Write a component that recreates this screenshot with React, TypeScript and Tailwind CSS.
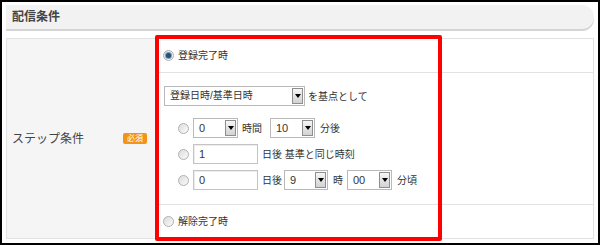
function Radio({ checked }: { checked?: boolean }) {
  return (
    <span className="flex h-[11px] w-[11px] shrink-0 items-center justify-center rounded-full border border-[#b0b0b0] bg-linear-to-br from-[#dcdcdc] to-[#fbfbfb]">
      {checked && <span className="h-[5px] w-[5px] rounded-full bg-[#24507a] shadow-[0_0_0_1px_#7d9bb8]" />}
    </span>
  );
}

function Select({ value, w, size = 'text-[11px]' }: { value: string; w: string; size?: string }) {
  return (
    <div className={`flex h-[20px] ${w} shrink-0 items-center border border-[#b9b9b9] bg-white`}>
      <span className={`flex-1 pl-[5px] ${size} leading-none`}>{value}</span>
      <span className="mr-[1px] flex h-[16px] w-[11px] items-center justify-center border border-[#8e8e8e] bg-linear-to-b from-[#f6f6f6] to-[#d2d2d2]">
        <span className="h-0 w-0 border-x-[3px] border-t-[4px] border-x-transparent border-t-black" />
      </span>
    </div>
  );
}

function TextInput({ value }: { value: string }) {
  return (
    <div className="flex h-[20px] w-[65px] shrink-0 items-center border border-[#c4c4c4] bg-white pl-[5px] text-[11px] leading-none shadow-[inset_1px_1px_0_#ececec]">
      {value}
    </div>
  );
}

export default function App() {
  return (
    <div className="relative h-[245px] w-[600px] overflow-hidden border-2 border-black bg-white font-['Liberation_Sans','Noto_Sans_CJK_JP',sans-serif] text-[10px] text-[#333]">
      {/* 見出し */}
      <div className="ml-[4px] mt-[3px] flex h-[24px] w-[588px] items-center rounded-r-[12px] bg-[#f2f2f2] pl-[6px] shadow-[0_2px_0_#d4d4d4]">
        <span className="text-[12px] font-bold text-[#444]">配信条件</span>
      </div>

      <div className="ml-[4px] mt-[9px] flex h-[201px] w-[588px] border border-[#e2e2e2]">
        <div className="flex w-[148px] items-center bg-[#f5f5f5] pl-[5px] pr-[8px]">
          <span className="flex-1 text-[12px] text-[#444]">ステップ条件</span>
          <span className="flex h-[11px] w-[24px] items-center justify-center rounded-[2px] bg-[#f29419] text-[8px] leading-none text-white">
            必須
          </span>
        </div>

        <div className="flex flex-1 flex-col">
          <div className="flex h-[34px] items-center gap-[4px] border-b border-[#e2e2e2] pl-[8px]">
            <Radio checked />
            <span>登録完了時</span>
          </div>

          <div className="flex h-[132px] flex-col border-b border-[#e2e2e2] pl-[9px] pt-[13px]">
            <div className="flex items-center gap-[3px]">
              <Select value="登録日時/基準日時" w="w-[141px]" size="text-[10px]" />
              <span>を基点として</span>
            </div>

            <div className="mt-[12px] flex flex-col gap-[6px] pl-[14px]">
              <div className="flex items-center">
                <Radio />
                <span className="w-[4px]" />
                <Select value="0" w="w-[45px]" />
                <span className="ml-[4px]">時間</span>
                <span className="ml-[8px]" />
                <Select value="10" w="w-[45px]" />
                <span className="ml-[5px]">分後</span>
              </div>
              <div className="flex items-center">
                <Radio />
                <span className="w-[4px]" />
                <TextInput value="1" />
                <span className="ml-[4px]">日後 基準と同じ時刻</span>
              </div>
              <div className="flex items-center">
                <Radio />
                <span className="w-[4px]" />
                <TextInput value="0" />
                <span className="ml-[4px] mr-[2px]">日後</span>
                <Select value="9" w="w-[44px]" />
                <span className="ml-[5px] mr-[4px]">時</span>
                <Select value="00" w="w-[45px]" />
                <span className="ml-[5px]">分頃</span>
              </div>
            </div>
          </div>

          <div className="flex flex-1 items-center gap-[4px] pl-[8px]">
            <Radio />
            <span>解除完了時</span>
          </div>
        </div>
      </div>

      {/* 注釈の赤枠 */}
      <div className="absolute left-[153px] top-[33px] h-[206px] w-[287px] rounded-[2px] border-[4px] border-[#f00]" />
    </div>
  );
}
